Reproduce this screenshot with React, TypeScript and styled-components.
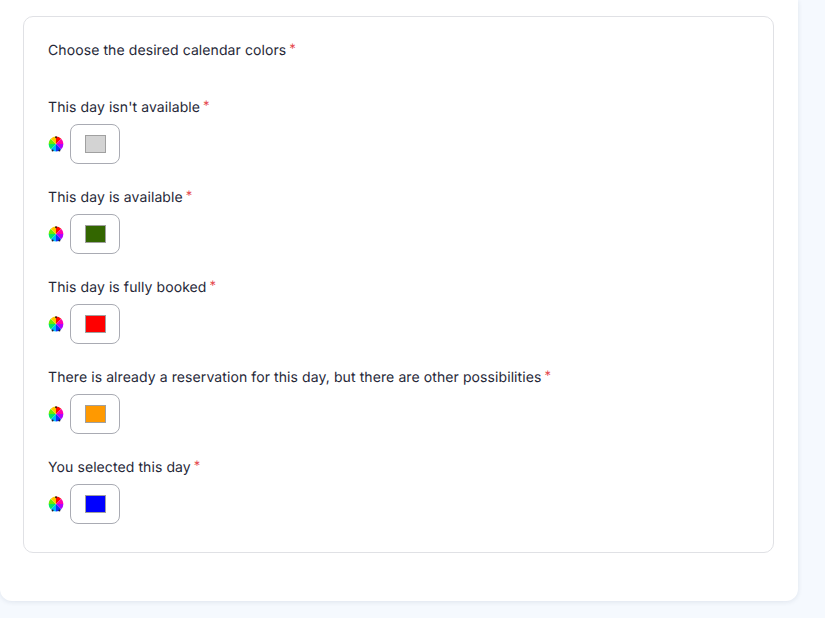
import React from "react";
import styled, { createGlobalStyle } from "styled-components";

const Global = createGlobalStyle`
  html, body { margin: 0; padding: 0; background: #f5f9fe; }
  body {
    font-family: Inter, "Liberation Sans", sans-serif;
    overflow: hidden;
    text-rendering: geometricPrecision;
  }
`;
const Page = styled.div`
  width: 825px;
  height: 618px;
  box-sizing: border-box;
  overflow: hidden;
`;
const Panel = styled.main`
  width: 798px;
  height: 601px;
  box-sizing: border-box;
  padding: 16px 24px 48px 23px;
  background: #fff;
  border-radius: 0 0 12px 12px;
  box-shadow: 0 1px 5px rgba(30, 50, 90, 0.1);
`;
const Card = styled.section`
  box-sizing: border-box;
  height: 537px;
  border: 1px solid #e0e1e5;
  border-radius: 10px;
  padding: 24px 24px 0;
`;
const Label = styled.div`
  font-size: 14px;
  line-height: 20px;
  letter-spacing: 0.09px;
  color: #262838;
  display: flex;
`;
const Star = styled.span`
  color: #e5484d;
  margin-left: 3px;
  font-size: 13px;
  line-height: 17px;
`;
const Heading = styled(Label)`
  margin-bottom: 37px;
`;
const Field = styled.div`
  height: 90px;
`;
const Control = styled.div`
  display: flex;
  align-items: center;
  gap: 6px;
  margin-top: 6px;
`;
const Wheel = styled.svg`
  width: 16px;
  height: 16px;
  display: block;
`;
const SwatchButton = styled.div`
  width: 50px;
  height: 40px;
  box-sizing: border-box;
  border: 1px solid #a9abb3;
  border-radius: 8px;
  background: #fff;
  display: flex;
  align-items: center;
  justify-content: center;
`;
const Swatch = styled.div<{ $color: string }>`
  width: 21px;
  height: 18px;
  box-sizing: border-box;
  border: 1px solid #a0a0a0;
  background: ${(p) => p.$color};
  background-clip: padding-box;
`;

const slices = ["#ff1000", "#ff00b0", "#b000ff", "#1030ff", "#00b8ff", "#00e868", "#70e800", "#ffc800"];

const ColorWheel = () => (
  <Wheel viewBox="0 0 16 16" aria-hidden="true">
    <defs>
      <filter id="wheel-soft" x="-10%" y="-10%" width="120%" height="120%">
        <feGaussianBlur stdDeviation="0.3" />
      </filter>
    </defs>
    <g filter="url(#wheel-soft)">
      {slices.map((c, i) => {
        const a0 = (i * Math.PI) / 4 - Math.PI / 2;
        const a1 = ((i + 1) * Math.PI) / 4 - Math.PI / 2;
        return (
          <path
            key={c}
            d={`M8 8L${8 + 7.4 * Math.cos(a0)} ${8 + 7.4 * Math.sin(a0)}A7.4 7.4 0 0 1 ${8 + 7.4 * Math.cos(a1)} ${8 + 7.4 * Math.sin(a1)}Z`}
            fill={c}
          />
        );
      })}
      <circle cx="8" cy="1.3" r="1" fill="#222" />
      <circle cx="4.6" cy="14.4" r="1" fill="#222" />
      <circle cx="11.4" cy="14.4" r="1" fill="#222" />
    </g>
  </Wheel>
);

const fields = [
  { label: "This day isn't available", color: "#d3d3d3" },
  { label: "This day is available", color: "#336600" },
  { label: "This day is fully booked", color: "#ff0000" },
  { label: "There is already a reservation for this day, but there are other possibilities", color: "#ff9900" },
  { label: "You selected this day", color: "#0000ff" },
];

export default function App() {
  return (
    <Page>
      <Global />
      <Panel>
        <Card>
          <Heading>
            Choose the desired calendar colors<Star>*</Star>
          </Heading>
          {fields.map((f) => (
            <Field key={f.label}>
              <Label>
                {f.label}
                <Star>*</Star>
              </Label>
              <Control>
                <ColorWheel />
                <SwatchButton>
                  <Swatch $color={f.color} />
                </SwatchButton>
              </Control>
            </Field>
          ))}
        </Card>
      </Panel>
    </Page>
  );
}
